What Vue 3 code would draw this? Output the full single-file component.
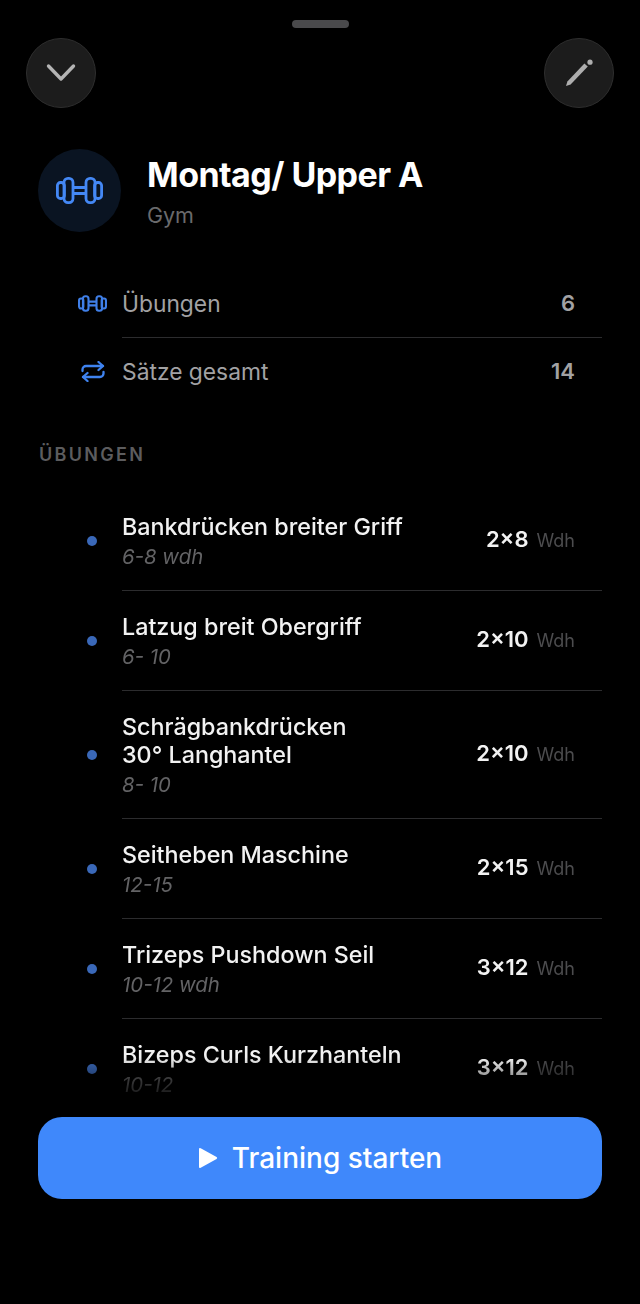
<template>
  <div class="sheet">
    <div class="handle"></div>

    <div class="topbar">
      <button type="button" class="round-btn">
        <svg width="30" height="20" viewBox="0 0 30 20" fill="none" stroke="#b4b4b4" stroke-width="3.4" stroke-linecap="round" stroke-linejoin="round">
          <path d="M2.5 3 L15 16 L27.5 3" />
        </svg>
      </button>
      <button type="button" class="round-btn">
        <svg width="30" height="30" viewBox="0 0 30 30" fill="#aeaeae">
          <path d="M2 28 L3.4 23.4 L20.4 5.4 L23.8 8.6 L6.6 26.6 Z" />
          <circle cx="26" cy="4.2" r="2.6" />
        </svg>
      </button>
    </div>

    <div class="head">
      <div class="head-icon">
        <svg width="47" height="27" viewBox="0 0 47 27" fill="none" stroke="#4488f5" stroke-width="2.8" stroke-linejoin="round">
          <rect x="1.4" y="5.5" width="7" height="16" rx="3" />
          <rect x="8" y="1.4" width="9" height="24.2" rx="4" />
          <rect x="38.6" y="5.5" width="7" height="16" rx="3" />
          <rect x="30" y="1.4" width="9" height="24.2" rx="4" />
          <path d="M17 10.5 H30 M17 16.5 H30" />
        </svg>
      </div>
      <div class="head-text">
        <h1 class="title">Montag/ Upper A</h1>
        <p class="subtitle">Gym</p>
      </div>
    </div>

    <div class="stats">
      <div class="stat">
        <span class="stat-icon">
          <svg width="29" height="17" viewBox="0 0 47 27" fill="none" stroke="#3f7fe8" stroke-width="3.4" stroke-linejoin="round">
            <rect x="1.7" y="5.5" width="7" height="16" rx="3" />
            <rect x="8" y="1.7" width="9" height="23.6" rx="4" />
            <rect x="38.3" y="5.5" width="7" height="16" rx="3" />
            <rect x="30" y="1.7" width="9" height="23.6" rx="4" />
            <path d="M17 10.5 H30 M17 16.5 H30" />
          </svg>
        </span>
        <div class="stat-body">
          <span class="stat-label">Übungen</span>
          <span class="stat-value">6</span>
        </div>
      </div>
      <div class="stat">
        <span class="stat-icon">
          <svg width="24" height="21" viewBox="0 0 24 21" fill="none" stroke="#3f83f0" stroke-width="2.3" stroke-linecap="round" stroke-linejoin="round">
            <path d="M1.5 10 V8.5 A3.5 3.5 0 0 1 5 5 H22" />
            <path d="M17.5 1 L22 5 L17.5 9" />
            <path d="M22.5 11 V12.5 A3.5 3.5 0 0 1 19 16 H2" />
            <path d="M6.5 12 L2 16 L6.5 20" />
          </svg>
        </span>
        <div class="stat-body stat-body-last">
          <span class="stat-label">Sätze gesamt</span>
          <span class="stat-value">14</span>
        </div>
      </div>
    </div>

    <div class="section-label">ÜBUNGEN</div>

    <div class="list">
      <div v-for="ex in exercises" :key="ex.name" class="row">
        <span class="dot"></span>
        <div class="row-body">
          <div class="row-text">
            <div class="row-name">
              <div v-for="line in ex.name.split('|')" :key="line">{{ line }}</div>
            </div>
            <div class="row-note">{{ ex.note }}</div>
          </div>
          <div class="row-sets">
            <span class="sets-num">{{ ex.sets }}</span>
            <span class="sets-unit">Wdh</span>
          </div>
        </div>
      </div>
    </div>

    <button type="button" class="start-btn">
      <svg width="20" height="22" viewBox="0 0 20 22">
        <path d="M1 2.2 Q1 0.4 2.7 1.3 L18.6 10 Q19.8 11 18.6 12 L2.7 20.7 Q1 21.6 1 19.8 Z" fill="#fff" />
      </svg>
      Training starten
    </button>
  </div>
</template>

<script setup>
const exercises = [
  { name: 'Bankdrücken breiter Griff', note: '6-8 wdh', sets: '2×8' },
  { name: 'Latzug breit Obergriff', note: '6- 10', sets: '2×10' },
  { name: 'Schrägbankdrücken|30° Langhantel', note: '8- 10', sets: '2×10' },
  { name: 'Seitheben Maschine', note: '12-15', sets: '2×15' },
  { name: 'Trizeps Pushdown Seil', note: '10-12 wdh', sets: '3×12' },
  { name: 'Bizeps Curls Kurzhanteln', note: '10-12', sets: '3×12' }
]
</script>

<style>
html,
body {
  margin: 0;
  background: #000;
}
</style>

<style scoped>
.sheet {
  height: 1304px;
  display: flex;
  flex-direction: column;
  background: #000;
  overflow: hidden;
  font-family: Inter, "Liberation Sans", sans-serif;
  color: #fff;
}

.handle {
  flex: none;
  width: 57px;
  height: 8px;
  margin: 20px auto 0;
  border-radius: 4px;
  background: #4a4a4c;
}

.topbar {
  flex: none;
  display: flex;
  justify-content: space-between;
  margin-top: 10px;
  padding: 0 26px;
}

.round-btn {
  width: 70px;
  height: 70px;
  padding: 0;
  display: flex;
  align-items: center;
  justify-content: center;
  border: 1px solid #2e2e2e;
  border-radius: 50%;
  background: #1c1c1c;
}

.head {
  flex: none;
  display: flex;
  align-items: center;
  gap: 26px;
  margin-top: 41px;
  padding: 0 38px;
}

.head-icon {
  width: 83px;
  height: 83px;
  display: flex;
  align-items: center;
  justify-content: center;
  border-radius: 50%;
  background: #0a1422;
}

.title {
  margin: 0;
  font-size: 34px;
  line-height: 40px;
  font-weight: 700;
  letter-spacing: -0.55px;
}

.subtitle {
  margin: 8px 0 0;
  font-size: 21.5px;
  line-height: 24px;
  color: #6a6a6c;
}

.stats {
  flex: none;
  margin-top: 37px;
  padding: 0 38px 0 78px;
}

.stat {
  display: flex;
  align-items: stretch;
}

.stat-icon {
  flex: none;
  width: 29px;
  margin-right: 15px;
  display: flex;
  align-items: center;
  justify-content: center;
}

.stat-body {
  flex: 1;
  height: 68px;
  display: flex;
  align-items: center;
  justify-content: space-between;
  padding-right: 27px;
  border-bottom: 1px solid #2c2c2e;
}

.stat-body-last {
  height: 66px;
  border-bottom: 0;
}

.stat-label {
  font-size: 22.8px;
  color: #a2a2a4;
}

.stat-value {
  font-size: 22px;
  font-weight: 600;
  color: #a2a2a4;
}

.section-label {
  flex: none;
  margin-top: 40px;
  padding-left: 39px;
  font-size: 18px;
  line-height: 22px;
  font-weight: 600;
  letter-spacing: 2.3px;
  color: #5c5c5e;
}

.list {
  flex: 1;
  min-height: 0;
  margin-top: 25px;
  padding: 0 38px 0 87px;
  overflow: hidden;
  -webkit-mask-image: linear-gradient(#000 calc(100% - 60px), transparent calc(100% - 8px));
  mask-image: linear-gradient(#000 calc(100% - 60px), transparent calc(100% - 8px));
}

.row {
  display: flex;
  align-items: center;
  gap: 25px;
}

.dot {
  flex: none;
  width: 10px;
  height: 10px;
  border-radius: 50%;
  background: #3a68b8;
}

.row-body {
  flex: 1;
  display: flex;
  align-items: center;
  justify-content: space-between;
  padding: 22px 27px 19px 0;
  border-bottom: 1px solid #2c2c2e;
}

.row-name {
  font-size: 23.3px;
  line-height: 28px;
  font-weight: 500;
  color: #f2f2f2;
}

.row-note {
  margin-top: 2px;
  font-size: 20.4px;
  line-height: 28px;
  font-style: italic;
  color: #636365;
}

.row-sets {
  display: flex;
  align-items: baseline;
  gap: 8px;
  margin-bottom: 6px;
}

.sets-num {
  font-size: 22px;
  font-weight: 600;
  color: #f2f2f2;
}

.sets-unit {
  font-size: 18px;
  color: #4c4c4e;
}

.start-btn {
  flex: none;
  height: 82px;
  margin: 0 38px 105px;
  display: flex;
  align-items: center;
  justify-content: center;
  gap: 14px;
  border: 0;
  border-radius: 24px;
  background: #3f88fb;
  color: #fff;
  font-family: inherit;
  font-size: 28px;
  font-weight: 500;
}
</style>
